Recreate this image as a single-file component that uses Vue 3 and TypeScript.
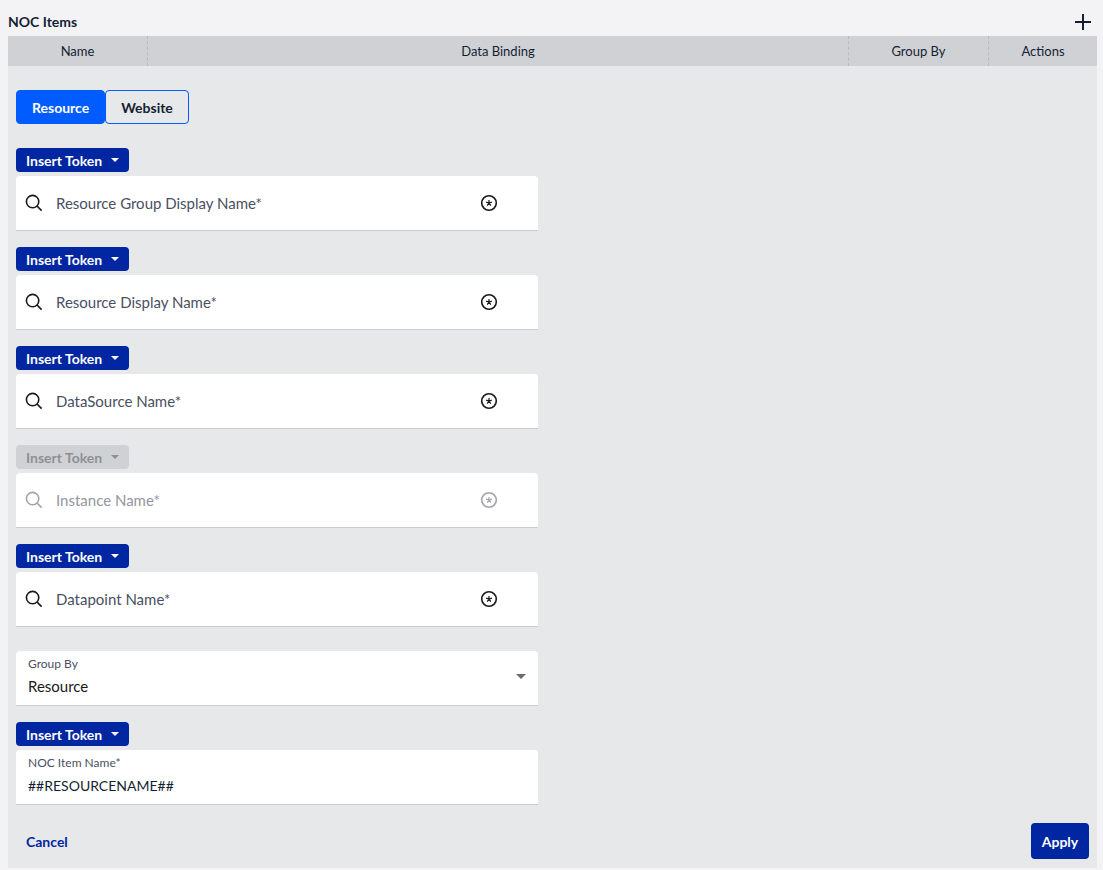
<script setup lang="ts">
import { reactive, ref } from 'vue'

interface LookupField {
  id: string
  label: string
  value: string
  disabled: boolean
}

const columns = [
  { title: 'Name', cls: 'col-name' },
  { title: 'Data Binding', cls: 'col-binding' },
  { title: 'Group By', cls: 'col-group' },
  { title: 'Actions', cls: 'col-actions' },
]

const kinds = ['Resource', 'Website']
const kind = ref('Resource')

const fields = reactive<LookupField[]>([
  { id: 'resource-group', label: 'Resource Group Display Name*', value: '', disabled: false },
  { id: 'resource', label: 'Resource Display Name*', value: '', disabled: false },
  { id: 'datasource', label: 'DataSource Name*', value: '', disabled: false },
  { id: 'instance', label: 'Instance Name*', value: '', disabled: true },
  { id: 'datapoint', label: 'Datapoint Name*', value: '', disabled: false },
])

const groupBy = ref('Resource')
const itemName = ref('##RESOURCENAME##')
</script>

<template>
  <main class="page">
    <header class="title-bar">
      <h1>NOC Items</h1>
      <button class="add" type="button" aria-label="Add NOC item">
        <svg width="16" height="16" viewBox="0 0 16 16" aria-hidden="true">
          <path d="M8 0V16M0 8H16" stroke="currentColor" stroke-width="2" />
        </svg>
      </button>
    </header>

    <table class="columns">
      <thead>
        <tr>
          <th v-for="c in columns" :key="c.title" :class="c.cls" scope="col">{{ c.title }}</th>
        </tr>
      </thead>
    </table>

    <form class="panel" @submit.prevent>
      <div class="toggle" role="group" aria-label="Item type">
        <button
          v-for="k in kinds"
          :key="k"
          type="button"
          :class="{ active: kind === k }"
          :aria-pressed="kind === k"
          @click="kind = k"
        >{{ k }}</button>
      </div>

      <div v-for="f in fields" :key="f.id" class="group">
        <button class="token" type="button" :disabled="f.disabled">
          Insert Token
          <svg width="8" height="4" viewBox="0 0 8 4" aria-hidden="true"><path d="M0 0H8L4 4Z" fill="currentColor" /></svg>
        </button>
        <div class="field lookup" :class="{ disabled: f.disabled, filled: f.value }">
          <svg class="search" width="18" height="18" viewBox="0 0 18 18" fill="none" stroke="currentColor" aria-hidden="true">
            <circle cx="7.6" cy="7.6" r="6.2" stroke-width="1.6" />
            <path d="M12 12L16.6 16.6" stroke-width="1.7" />
          </svg>
          <div class="entry">
            <label :for="f.id">{{ f.label }}</label>
            <input :id="f.id" v-model="f.value" type="text" :disabled="f.disabled" />
          </div>
          <button class="wildcard" type="button" aria-label="Use wildcard" :disabled="f.disabled">
            <svg width="18" height="18" viewBox="0 0 18 18" fill="none" stroke="currentColor" aria-hidden="true">
              <circle cx="9" cy="9" r="7.3" stroke-width="1.6" />
              <path d="M9 9V5.9M9 9L6.1 8.1M9 9L11.9 8.1M9 9L7.2 11.6M9 9L10.8 11.6" stroke-width="1.2" />
            </svg>
          </button>
        </div>
      </div>

      <div class="field stacked select-field">
        <label for="group-by">Group By</label>
        <select id="group-by" v-model="groupBy">
          <option>Resource</option>
        </select>
        <svg class="caret" width="10" height="5" viewBox="0 0 10 5" aria-hidden="true"><path d="M0 0H10L5 5Z" fill="currentColor" /></svg>
      </div>

      <div class="group">
        <button class="token" type="button">
          Insert Token
          <svg width="8" height="4" viewBox="0 0 8 4" aria-hidden="true"><path d="M0 0H8L4 4Z" fill="currentColor" /></svg>
        </button>
        <div class="field stacked">
          <label for="item-name">NOC Item Name*</label>
          <input id="item-name" v-model="itemName" type="text" />
        </div>
      </div>

      <footer class="actions">
        <button class="cancel" type="button">Cancel</button>
        <button class="apply" type="submit">Apply</button>
      </footer>
    </form>
  </main>
</template>

<style>
body {
  margin: 0;
  background: #f3f3f5;
}
</style>

<style scoped>
* {
  box-sizing: border-box;
}

.page {
  padding: 0 6px 0 8px;
  font-family: Lato, "Liberation Sans", sans-serif;
  font-size: 14px;
  color: #151f33;
}

button,
input,
select {
  font: inherit;
  color: inherit;
  border: 0;
  padding: 0;
  margin: 0;
  background: none;
}

button:not(:disabled) {
  cursor: pointer;
}

svg {
  display: block;
  flex: none;
}

.title-bar {
  display: flex;
  align-items: center;
  justify-content: space-between;
  height: 36px;
  padding: 8px 6px 0 0;
}

h1 {
  margin: 0;
  font-size: 14px;
  line-height: 20px;
  font-weight: 700;
}

.columns {
  width: 100%;
  table-layout: fixed;
  border-collapse: separate;
  border-spacing: 0;
  background: #d0d1d5;
}

th {
  height: 30px;
  padding: 0;
  font-size: 13px;
  font-weight: 400;
  text-align: center;
  border-right: 1px dashed #b8babf;
}

th:last-child {
  border-right: 0;
}

.col-name,
.col-group {
  width: 140px;
}

.col-actions {
  width: 108px;
}

.panel {
  display: flex;
  flex-direction: column;
  gap: 16px;
  padding: 24px 8px 9px;
  background: #e7e8ea;
}

.toggle {
  display: flex;
  margin-bottom: 8px;
}

.toggle button {
  height: 34px;
  padding: 0 15px;
  border: 1px solid #005cff;
  border-radius: 4px;
  font-weight: 700;
}

.toggle .active {
  background: #005cff;
  color: #fff;
}

.group {
  display: flex;
  flex-direction: column;
  align-items: flex-start;
  gap: 4px;
}

.token {
  display: flex;
  align-items: center;
  justify-content: space-between;
  width: 113px;
  height: 24px;
  padding: 0 10px;
  border-radius: 4px;
  background: #0026a1;
  color: #fff;
  font-weight: 700;
}

.token:disabled {
  background: #d0d1d5;
  color: #8c9096;
}

.field {
  width: 100%;
  max-width: 522px;
  height: 55px;
  background: #fff;
  border-bottom: 1px solid #c9cbd1;
  border-radius: 4px 4px 0 0;
}

.lookup {
  display: flex;
  align-items: center;
  padding: 0 40px 0 9px;
}

.search,
.wildcard {
  color: #1a1a1a;
}

.entry {
  display: grid;
  flex: 1;
  align-items: center;
  margin: 0 12px 0 13px;
}

.entry label,
.entry input {
  grid-area: 1 / 1;
  line-height: 20px;
}

.entry label {
  color: #4a5063;
  font-size: 15px;
  pointer-events: none;
}

.filled .entry label {
  visibility: hidden;
}

input,
select {
  width: 100%;
  outline: 0;
}

.disabled .search,
.disabled .wildcard {
  color: #a3a4ab;
}

.disabled .entry label {
  color: #93969f;
}

.stacked {
  display: grid;
  grid-template-rows: 18px 26px;
  align-items: center;
  padding: 4px 12px 0;
}

.stacked label {
  font-size: 12px;
  line-height: 18px;
  color: #4a5063;
}

.stacked input,
.stacked select {
  height: 26px;
}

.stacked input {
  font-size: 14px;
}

.select-field {
  position: relative;
  margin-top: 8px;
}

.select-field select {
  appearance: none;
  font-size: 15px;
  color: #1a1a1a;
}

.caret {
  position: absolute;
  top: 23px;
  right: 12px;
  color: #6b6b6b;
  pointer-events: none;
}

.actions {
  display: flex;
  align-items: center;
  justify-content: space-between;
  margin-top: 2px;
}

.actions button {
  height: 36px;
  padding: 0 10px;
  border-radius: 4px;
  font-size: 14px;
  font-weight: 700;
}

.cancel {
  color: #0026a1;
}

.actions .apply {
  min-width: 58px;
  background: #0026a1;
  color: #fff;
}
</style>
